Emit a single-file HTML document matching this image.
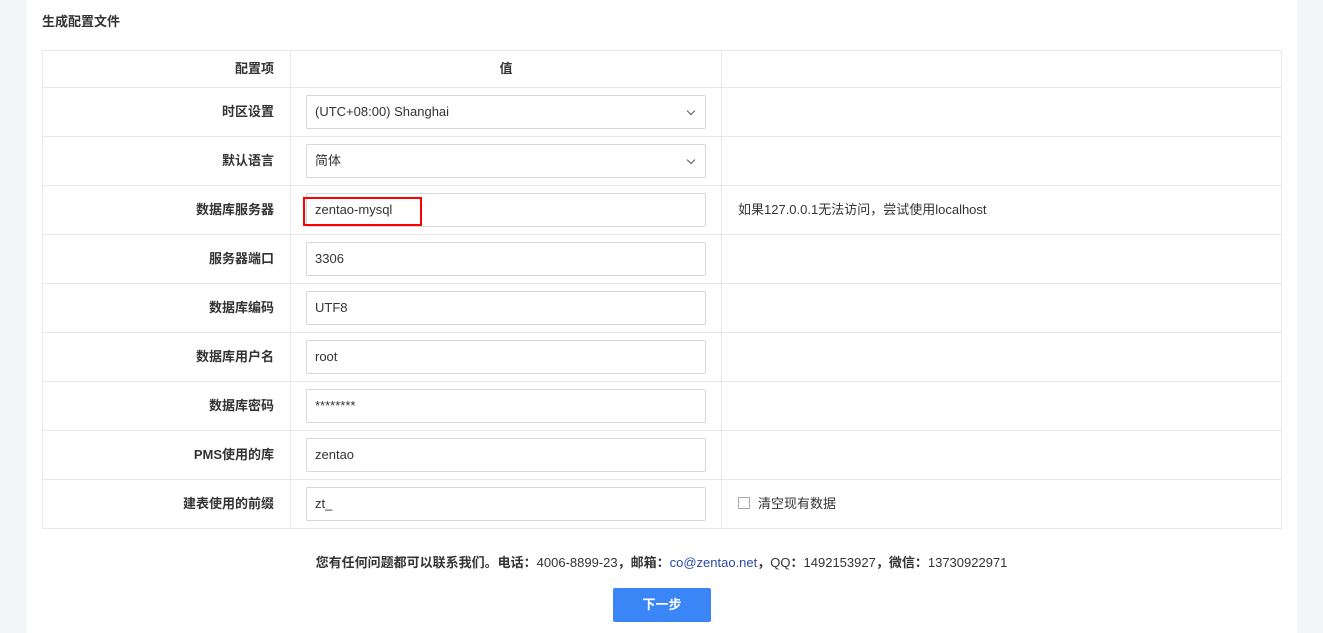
<!DOCTYPE html>
<html><head><meta charset="utf-8"><style>
body{margin:0;background:#f4f5f7;width:1323px;height:633px;overflow:hidden;font-family:"Liberation Sans","Noto Sans CJK SC",sans-serif;font-size:13px;color:#333;}
.panel{position:absolute;left:26px;top:0;width:1271px;height:633px;background:#fff;}
.title{position:absolute;left:42px;top:11px;font-weight:bold;font-size:13px;color:#333;}
table{position:absolute;left:42px;top:50px;border-collapse:collapse;width:1240px;}
td{border:1px solid #e6e8ee;height:48px;padding:0;line-height:16px;}
td.l,td.n{height:47px;}
tr.h td{height:36px;font-weight:bold;}
tr.h td.l{height:35px;}
td.l{width:231px;text-align:right;padding-right:16px;font-weight:bold;padding-bottom:1px;}
td.v{width:400px;padding:0 15px;}
td.n{padding-left:16px;padding-bottom:1px;}
.inp{height:32px;border:1px solid #d4d8e2;border-radius:2px;line-height:32px;padding-left:8px;position:relative;}
.arr{position:absolute;right:11px;top:12px;width:5px;height:5px;border-right:1.3px solid #555;border-bottom:1.3px solid #555;transform:rotate(45deg);}
.red{position:absolute;left:303px;top:197px;width:115px;height:25px;border:2px solid #ff0000;box-sizing:content-box;}
.cb{display:inline-block;width:10px;height:10px;border:1px solid #aaa;vertical-align:-1px;margin-right:8px;}
.foot{position:absolute;left:0;width:1323px;top:552px;text-align:center;color:#333;}
.foot b{font-weight:bold}
.foot a{color:#2a4aa8;text-decoration:none}
.btn{position:absolute;left:613px;top:588px;width:98px;height:34px;background:#3b86f7;border-radius:2px;color:#fff;text-align:center;line-height:34px;font-weight:bold;}
</style></head><body>
<div class="panel"></div>
<div class="title">生成配置文件</div>
<table>
<tr class="h"><td class="l">配置项</td><td class="v" style="text-align:center">值</td><td></td></tr>
<tr><td class="l">时区设置</td><td class="v"><div class="inp">(UTC+08:00) Shanghai<span class="arr"></span></div></td><td></td></tr>
<tr><td class="l">默认语言</td><td class="v"><div class="inp">简体<span class="arr"></span></div></td><td></td></tr>
<tr><td class="l">数据库服务器</td><td class="v"><div class="inp">zentao-mysql</div></td><td class="n">如果127.0.0.1无法访问，尝试使用localhost</td></tr>
<tr><td class="l">服务器端口</td><td class="v"><div class="inp">3306</div></td><td></td></tr>
<tr><td class="l">数据库编码</td><td class="v"><div class="inp">UTF8</div></td><td></td></tr>
<tr><td class="l">数据库用户名</td><td class="v"><div class="inp">root</div></td><td></td></tr>
<tr><td class="l">数据库密码</td><td class="v"><div class="inp">********</div></td><td></td></tr>
<tr><td class="l">PMS使用的库</td><td class="v"><div class="inp">zentao</div></td><td></td></tr>
<tr><td class="l">建表使用的前缀</td><td class="v"><div class="inp">zt_</div></td><td class="n"><span class="cb"></span>清空现有数据</td></tr>
</table>
<div class="red"></div>
<div class="foot"><b>您有任何问题都可以联系我们。电话：</b>4006-8899-23<b>，邮箱：</b><a>co@zentao.net</a><b>，</b>QQ<b>：</b>1492153927<b>，微信：</b>13730922971</div>
<div class="btn">下一步</div>
</body></html>
